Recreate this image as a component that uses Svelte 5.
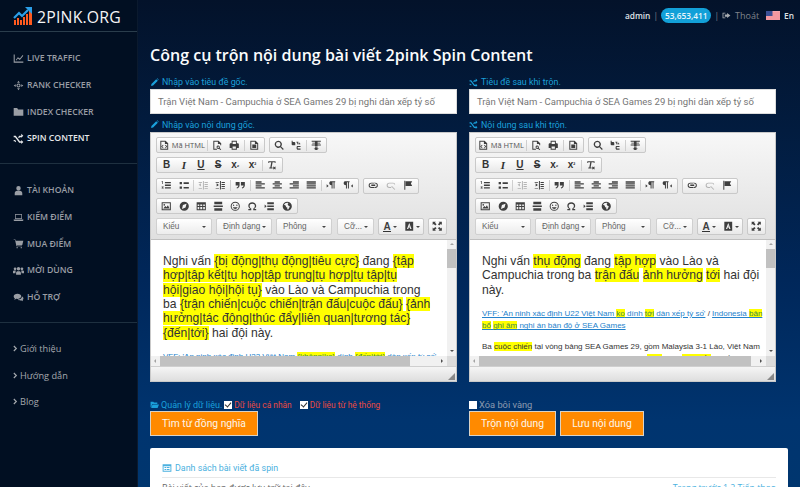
<script>
  const menuA = [
    ['chart', 'LIVE TRAFFIC'],
    ['target', 'RANK CHECKER'],
    ['folder', 'INDEX CHECKER'],
    ['shuffle', 'SPIN CONTENT', true]
  ];
  const menuB = [
    ['user', 'TÀI KHOẢN'],
    ['laptop', 'KIẾM ĐIỂM'],
    ['cart', 'MUA ĐIỂM'],
    ['users', 'MỜI DÙNG'],
    ['chat', 'HỖ TRỢ']
  ];
  const menuC = ['Giới thiệu', 'Hướng dẫn', 'Blog'];

  const icons = {
    chart: 'M1 2h1.500v10.500H15V14H1zM4 10l3-4 3 2 4-5 1 1-5 6-3-2-2 3z',
    target: 'M8 1l2 3H6zM8 15l-2-3h4zM1 8l3-2v4zM15 8l-3 2V6zM8 5a3 3 0 110 6 3 3 0 010-6zm0 1.500a1.500 1.500 0 100 3 1.500 1.500 0 000-3z',
    folder: 'M1 3h5l1.500 2H15v9H1z',
    shuffle: 'M1 4h3l6 8h2v-2l3 3-3 3v-2H9L3 6H1zM1 10h2l1.500 2-1 1.500L2.500 12H1zM9 4h3V1l3 3-3 3V6h-2L8.500 7.500l-1-1.500z',
    user: 'M8 1.500a3.200 3.200 0 110 6.500 3.200 3.200 0 010-6.500zM2.500 15v-3c0-2 1.500-3.500 3.500-3.500h4c2 0 3.500 1.500 3.500 3.500v3z',
    laptop: 'M3 3h10v7H3zm1 1v5h8V4zM1 11h14v1.500l-1 .5H2l-1-.5z',
    cart: 'M1 2h2.500l.5 2h11l-1.500 6H5.500l.3 1H13v1H5L3 3H1zM6 13a1 1 0 110 2 1 1 0 010-2zm6 0a1 1 0 110 2 1 1 0 010-2z',
    users: 'M8 3a2.500 2.500 0 110 5 2.500 2.500 0 010-5zM4.500 14v-2.500C4.500 10 5.500 9 7 9h2c1.500 0 2.500 1 2.500 2.500V14zM3 3.500a2 2 0 110 4 2 2 0 010-4zM13 3.500a2 2 0 110 4 2 2 0 010-4zM0 12V9.500C0 8.500 1 8 2 8h2L3.500 12zM16 12V9.500c0-1-1-1.500-2-1.500h-2l.5 4z',
    chat: 'M6.500 2.500c3 0 5.500 1.700 5.500 3.700S9.500 10 6.500 10c-.700 0-1.300 0-2-.2L2 11.500l.7-2.300C1.500 8.500 1 7.400 1 6.200c0-2 2.500-3.700 5.500-3.700zM13 6.500c1.300.6 2.200 1.700 2.200 2.800 0 .9-.4 1.700-1.200 2.300l.5 1.900-2.200-1.300c-1.900.4-4.300 0-5.300-1.200 3.500 0 6-2 6-4.500z',
    pencil: 'M11 2l3 3-8.500 8.500L2 14l.5-3.500zM12 1l1-.5 2.500 2.500-.5 1z',
    open: 'M1 3h5l1 1.500h6V7H4l-2 6H1zM4.500 8H16l-2.500 6H2z',
    list: 'M1 2h14v12H1zm1.500 3v7.500h11V5zM4 6.500h3V8H4zM8 6.500h4V8H8zM4 9.500h3V11H4zM8 9.500h4V11H8z',
    logout: 'M1 3h5v1.500H2.500v7H6V13H1zM9 3.500L15 8l-6 4.500V10H5V6h4z',
    source: 'M2 1h8l4 4v10H2zm1.500 1.500v11h9V6H9V2.500zM7 8L5 10l2 2-1 .7L3.500 10 6 7.300zM9 8l2 2-2 2 1 .7 2.500-2.700L10 7.300z',
    preview: 'M2 1h8l4 4v3h-1.500V6H9V2.500H3.500v11h4V15H2zM9.500 8.500a2.500 2.500 0 012.200 3.700l2.300 2.300-1 1-2.300-2.300A2.500 2.500 0 119.500 8.500zm0 1.300a1.200 1.200 0 100 2.400 1.200 1.200 0 000-2.400z',
    print: 'M4 1h8v4h2l1 1v6h-3v3H4v-3H1V6l1-1h2zm1.500 1.500V6h5V2.500zM5.500 10v3.500h5V10z',
    template: 'M2 1h8l4 4v10H2zm1.500 1.500v11h9V6H9V2.500zM5 7h6v5H5z',
    search: 'M6.500 1a5.500 5.500 0 014.400 8.800l4 4-1.300 1.300-4-4A5.500 5.500 0 116.500 1zm0 2a3.500 3.500 0 100 7 3.500 3.500 0 000-7z',
    replace: 'M1 1h1.500v2H5c1 0 1.500.6 1.500 1.500V8H2.500C1.500 8 1 7.400 1 6.500zM9 9h5.500v1.500H11c-.6 0-1 .5-1 1.200s.4 1.300 1 1.300h3.500V15H10.500C9.300 15 8.500 13.500 8.500 12S9 9.800 9 9zM8 2.500l3.500.2L10 4h2.500c.8 0 1.500.7 1.500 1.500V7h-1.300V5.800c0-.3-.2-.5-.5-.5H10l1.500 1.300-1 .7z',
    spell: 'M1 1h14v1.500h-5V4h4v1.500h-4V7h5v1.500h-5V10H6V8.500H1V7h5V5.500H2V4h4V2.500H1zM6 11h4v2h2l-4 3-4-3h2z',
    clear: 'M2 2h11v2.500h-1L11.500 3.500H8.500L7 11.500h1.500V13h-5v-1.500H5l1.500-8H3.500L3 4.500H2zM10 10l1.200 1.200L12.500 10l1 1-1.300 1.300 1.300 1.200-1 1-1.300-1.300L10 14.500l-1-1 1.300-1.200L9 11z',
    ol: 'M1 2h2v4H2V3H1zM1 10h3v1L2.500 12H4v1H1v-1l1.500-1H1zM6 3h9v2H6zM6 7h9v2H6zM6 11h9v2H6z',
    ul: 'M1 3h3.500v3.500H1zM1 10h3.500v3.500H1zM7 3.500h8v2.500H7zM7 10.500h8V13H7z',
    outdent: 'M7.500 1.500H9v13H7.500zM1 7.300l3.500-2.500v5zM10 3h5v1.500h-5zM10 6h5v1.500h-5zM10 9h5v1.500h-5zM10 12h5v1.500h-5zM1 3h5v1.500H1zM1 12h5v1.500H1z',
    indent: 'M7.500 1.500H9v13H7.500zM6 7.500L2.500 10V5zM10 3h5v1.500h-5zM10 6h5v1.500h-5zM10 9h5v1.500h-5zM10 12h5v1.500h-5zM1 3h5v1H1zM1 12h5v1H1z',
    quote: 'M1 3h6v5c0 2.500-1.500 4-4 5l-.7-1.200C4 11 5 10 5 8.500H1zM9 3h6v5c0 2.500-1.500 4-4 5l-.7-1.200C12 11 13 10 13 8.500H9z',
    aleft: 'M1 2h9v2H1zM1 5h14v2H1zM1 8h9v2H1zM1 11h14v2H1z',
    acenter: 'M4 2h8v2H4zM1 5h14v2H1zM4 8h8v2H4zM1 11h14v2H1z',
    aright: 'M6 2h9v2H6zM1 5h14v2H1zM6 8h9v2H6zM1 11h14v2H1z',
    ajust: 'M1 2h14v2H1zM1 5h14v2H1zM1 8h14v2H1zM1 11h14v2H1z',
    ltr: 'M7 2h7v1.500h-1V13h-1.500V3.500H10V13H8.500V8C6.500 8 5 7 5 5s1.500-3 2-3zM1 6.500l3 2.500-3 2.500z',
    rtl: 'M3 2h7v1.500H9V13H7.500V3.500H6V13H4.500V8C2.500 8 1 7 1 5s1.500-3 2-3zM15 6.500L12 9l3 2.500z',
    link: 'M5 4h3a4 4 0 013 1.500H5a2.500 2.500 0 000 5h6A4 4 0 018 12H5a4 4 0 010-8zM11 4a4 4 0 010 8H8.800c.5-.4.900-.9 1.200-1.500h1a2.500 2.500 0 000-5h-1C9.700 4.900 9.300 4.400 8.800 4zM5 7h6v2H5z',
    unlink: 'M5 4h6a3 3 0 013 3H12.500A1.500 1.500 0 0011 5.500H5a2.500 2.500 0 000 5h3V12H5a4 4 0 010-8zM9 9l5 5-1 1-5-5z',
    flag: 'M2 1h1.500v14H2zM4 2h10l-2 3.500L14 9H4z',
    image: 'M1 2h14v12H1zm1.500 1.500v9h11v-9zM3.500 11.500l3-4 2 2 2-3 2.500 5zM5 4.500a1.300 1.300 0 110 2.600 1.300 1.300 0 010-2.600z',
    flash: 'M8 1a7 7 0 110 14A7 7 0 018 1zm3.500 3L6 6l-1.500 6L10 10z',
    table: 'M1 2h14v12H1zm1.500 3.500v2.200H5V5.500zm4 0v2.200h3V5.500zm4.500 0v2.200h2.500V5.500zM2.500 9v3.500H5V9zm4 0v3.500h3V9zm4.500 0v3.500h2.500V9z',
    hr: 'M2 1h12v4H2zM1 7h14v2H1zM2 11h12v4H2z',
    smile: 'M8 1a7 7 0 110 14A7 7 0 018 1zm0 1.500a5.500 5.500 0 100 11 5.500 5.500 0 000-11zM5.500 5.500a1 1 0 110 2 1 1 0 010-2zm5 0a1 1 0 110 2 1 1 0 010-2zM4.500 9.500h7c-.5 1.500-2 2.500-3.500 2.500s-3-1-3.500-2.500z',
    omega: 'M8 2c3.500 0 6 2.300 6 5.300 0 2-1.200 3.700-3 4.700h3v2H9.500v-2.500c1.500-.7 2.500-2.200 2.500-4 0-2.200-1.700-3.500-4-3.500S4 5.300 4 7.500c0 1.800 1 3.300 2.500 4V14H2v-2h3C3.200 11 2 9.300 2 7.300 2 4.300 4.500 2 8 2z',
    pagebreak: 'M5 2h10v3H5zM5 7h10v2H5zM5 11h10v3H5zM1 5.500L4 8l-3 2.500z',
    globe: 'M8 1a7 7 0 110 14A7 7 0 018 1zm0 1.500a5.500 5.500 0 00-5 3.200l2.500 1.300 1 2.500 1.500.5v2.500l1.500.4 2.500-4.400-2.500-1.500-1-2.500L10 3a5.500 5.500 0 00-2-.5z',
    bgcolor: 'M2 1h12v14H2zM8 3l-3.500 9h2l.6-2h1.800l.6 2h2zm0 3.500l.5 2h-1z',
    full: 'M1 1h5L4.500 2.500 7 5 5 7 2.500 4.500 1 6zM15 1v5l-1.500-1.500L11 7 9 5l2.500-2.500L10 1zM1 15v-5l1.500 1.500L5 9l2 2-2.500 2.500L6 15zM15 15h-5l1.500-1.500L9 11l2-2 2.500 2.500L15 10z'
  };

  const t = (s, c = '') => ({ text: s, cls: c });
  const i = (n, off = false) => ({ icon: n, off });

  const rows = [
    [
      [{ icon: 'source', label: 'Mã HTML' }, 'sep', i('preview'), i('print'), 'sep', i('template')],
      [i('search'), i('replace'), 'sep', i('spell')]
    ],
    [[t('B', 'b'), t('I', 'it'), t('U', 'u'), t('S', 's'), { text: 'x', sub: '₂' }, { text: 'x', sub: '²' }, 'sep', i('clear')]],
    [
      [i('ol'), i('ul'), 'sep', i('outdent', true), i('indent'), 'sep', i('quote'), 'sep', i('aleft'), i('acenter'), i('aright'), i('ajust'), 'sep', i('ltr'), i('rtl')],
      [i('link'), i('unlink', true), i('flag')]
    ],
    [[i('image'), i('flash'), i('table'), i('hr'), i('smile'), i('omega'), i('pagebreak'), i('globe')]]
  ];

  const combos = [
    ['Kiểu', 'w56'],
    ['Định dạng', 'w56'],
    ['Phông', 'w56'],
    ['Cỡ...', 'w36']
  ];
</script>

{#snippet ic(name, cls = 'mi')}
  <svg class={cls} viewBox="0 0 16 16" aria-hidden="true"><path d={icons[name]} fill="currentColor" fill-rule="evenodd" /></svg>
{/snippet}

{#snippet toolbar()}
  <div class="toolbar">
    {#each rows as row}
      <div class="row">
        {#each row as group}
          <div class="group">
            {#each group as b}
              {#if b === 'sep'}
                <span class="sep"></span>
              {:else if b.label}
                <span class="tb wide">{@render ic(b.icon, 'ti')}<span class="lbl">{b.label}</span></span>
              {:else if b.icon}
                <span class="tb" class:off={b.off}>{@render ic(b.icon, 'ti')}</span>
              {:else}
                <span class="tb txt {b.cls || ''}">{b.text}{#if b.sub}<small>{b.sub}</small>{/if}</span>
              {/if}
            {/each}
          </div>
        {/each}
      </div>
    {/each}
    <div class="row combos">
      {#each combos as c}
        <div class="combo {c[1]}"><span>{c[0]}</span><i class="caret"></i></div>
      {/each}
      <div class="group colors">
        <span class="tb color"><span class="a">A</span><i class="caret"></i></span>
        <span class="tb color">{@render ic('bgcolor', 'ti')}<i class="caret"></i></span>
      </div>
      <div class="group fs"><span class="tb">{@render ic('full', 'ti')}</span></div>
    </div>
  </div>
{/snippet}

{#snippet frame(body)}
  <div class="editor">
    {@render toolbar()}
    <div class="view">
      <div class="content">{@render body()}</div>
      <div class="vbar"><i class="up"></i><span class="thumb"></span><i class="down"></i></div>
      <div class="hbar"><i class="lf"></i><span class="hthumb"></span><i class="rt"></i></div>
      <div class="corner"></div>
    </div>
    <div class="foot"><svg viewBox="0 0 8 8" class="grip"><path d="M8 0v8H0z" fill="#888" /></svg></div>
  </div>
{/snippet}

{#snippet leftBody()}
  <p class="lead nl">Nghi vấn <mark>{'{bị động|thụ động|tiêu cực}'}</mark> đang <mark>{'{tập hợp|tập kết|tụ họp|tập trung|tụ hợp|tụ tập|tụ hội|giao hội|hội tụ}'}</mark> vào Lào và Campuchia trong ba <mark>{'{trận chiến|cuộc chiến|trận đấu|cuộc đấu}'}</mark> <mark>{'{ảnh hưởng|tác động|thúc đẩy|liên quan|tương tác}'}</mark> <mark>{'{đến|tới}'}</mark> hai đội này.</p>
  <p class="small"><a href="#a">VFF: 'An ninh xác định U22 Việt Nam <mark>{'{không|ko}'}</mark> dính <mark>{'{đến|tới}'}</mark> dàn xếp tỷ số'</a></p>
{/snippet}

{#snippet rightBody()}
  <p class="lead">Nghi vấn <mark>thụ động</mark> đang <mark>tập hợp</mark> vào Lào và Campuchia trong ba <mark>trận đấu</mark> <mark>ảnh hưởng</mark> <mark>tới</mark> hai đội này.</p>
  <p class="small"><a href="#a">VFF: 'An ninh xác định U22 Việt Nam <mark>ko</mark> dính <mark>tới</mark> dàn xếp tỷ số'</a> / <a href="#b">Indonesia <mark>bản</mark> <mark>bổ</mark> <mark>ghi âm</mark> nghi án bán độ ở SEA Games</a></p>
  <p class="small">Ba <mark>cuộc chiến</mark> tại vòng bảng SEA Games 29, gồm Malaysia 3-1 Lào, Việt Nam 1-1 Campuchia và Thái Lan 3-0 Campuchia bị <mark>nghi</mark> dính <mark>dàn xếp</mark> tỷ số.</p>
{/snippet}

<div class="page">
  <aside class="side">
    <div class="logo">
      <svg class="mark" viewBox="0 0 20 20" aria-hidden="true">
        <path d="M1 19v-5h2v5zM4 19v-7h2v7zM7 19v-5h2v5zM10 19v-8h2v8zM13 19V8h2v11zM16 19V5h3v14z" fill="#ff5a1f" />
        <path d="M1 12l5-5 3 3 6-6" fill="none" stroke="#2b9fe8" stroke-width="2.200" />
        <path d="M12 1h7v7z" fill="#2b9fe8" />
      </svg>
      <span>2PINK.ORG</span>
    </div>
    <nav class="sec">
      {#each menuA as m}
        <div class="item" class:active={m[2]}>{@render ic(m[0])}<span>{m[1]}</span></div>
      {/each}
    </nav>
    <nav class="sec">
      {#each menuB as m}
        <div class="item">{@render ic(m[0])}<span>{m[1]}</span></div>
      {/each}
    </nav>
    <nav class="sec last">
      {#each menuC as m}
        <div class="item sub"><svg class="chev" viewBox="0 0 6 8"><path d="M1 1l3 3-3 3" fill="none" stroke="currentColor" stroke-width="1.400" /></svg><span>{m}</span></div>
      {/each}
    </nav>
  </aside>

  <main class="main">
    <header class="top">
      <b>admin</b><span class="pipe">|</span><span class="pill">53,653,411</span><span class="pipe">|</span>
      {@render ic('logout', 'lo')}<span class="out">Thoát</span>
      <svg class="us" viewBox="0 0 14 9" aria-hidden="true">
        <rect width="14" height="9" fill="#f4a6ad" />
        <path d="M0 2h14M0 4h14M0 6h14M0 8h14" stroke="#ef7f8a" stroke-width=".7" />
        <rect width="6.500" height="5" fill="#3a4f95" />
      </svg>
      <b>En</b>
    </header>

    <h1>Công cụ trộn nội dung bài viết 2pink Spin Content</h1>

    <div class="cols">
      <div class="col">
        <div class="label">{@render ic('pencil', 'li')}Nhập vào tiêu đề gốc.</div>
        <div class="input">Trận Việt Nam - Campuchia ở SEA Games 29 bị nghi dàn xếp tỷ số</div>
        <div class="label l2">{@render ic('pencil', 'li')}Nhập vào nội dung gốc.</div>
        {@render frame(leftBody)}
        <div class="opts">
          {@render ic('open', 'li')}<span class="blue">Quản lý dữ liệu.</span>
          <span class="ck on"></span><span class="red">Dữ liệu cá nhân</span>
          <span class="ck on gap"></span><span class="red">Dữ liệu từ hệ thống</span>
        </div>
        <div class="btns"><span class="btn w108">Tìm từ đồng nghĩa</span></div>
      </div>
      <div class="col">
        <div class="label">{@render ic('shuffle', 'li')}Tiêu đề sau khi trộn.</div>
        <div class="input">Trận Việt Nam - Campuchia ở SEA Games 29 bị nghi dàn xếp tỷ số</div>
        <div class="label l2">{@render ic('shuffle', 'li')}Nội dung sau khi trộn.</div>
        {@render frame(rightBody)}
        <div class="opts"><span class="ck"></span><span class="grey">Xóa bôi vàng</span></div>
        <div class="btns"><span class="btn w87">Trộn nội dung</span><span class="btn w84">Lưu nội dung</span></div>
      </div>
    </div>

    <section class="card">
      <div class="cardhead">{@render ic('list', 'ci')}Danh sách bài viết đã spin</div>
      <div class="cardrow"><span>Bài viết của bạn được lưu trữ tại đây</span><span class="pg">Trang trước 1 2 Tiếp theo</span></div>
    </section>
  </main>
</div>

<style>
  :global(body) { margin: 0; background: #00336b; }
  .page {
    display: grid;
    grid-template-columns: 138px 1fr;
    width: 800px;
    height: 487px;
    overflow: hidden;
    font-family: "Open Sans", "Noto Sans", sans-serif;
    background: linear-gradient(180deg, #03122a 0, #021c3f 130px, #00275a 280px, #00346f 420px, #00366f 487px);
  }
  .side {
    background: #010f22;
    border-right: 1px solid #0b1a2e;
    display: flex;
    flex-direction: column;
    box-sizing: border-box;
    height: 487px;
    overflow: hidden;
  }
  .logo {
    height: 32px;
    box-sizing: border-box;
    border-bottom: 1px solid #2a3d4c;
    display: flex;
    align-items: center;
    padding: 6px 0 0 13px;
    gap: 4px;
    color: #f4f5f6;
    font-size: 15.800px;
    font-weight: 400;
    letter-spacing: .2px;
  }
  .mark { width: 20px; height: 20px; margin-top: -5px; }
  .logo span { margin-top: -4px; }
  .sec {
    padding: 13px 0 13px 13px;
    border-bottom: 1px solid #1e3040;
    display: flex;
    flex-direction: column;
    height: 132px;
    box-sizing: border-box;
  }
  .sec:nth-of-type(2) { height: 159px; }
  .sec.last { border: 0; height: auto; padding-top: 12px; }
  .item {
    height: 26.700px;
    flex: none;
    display: flex;
    align-items: center;
    gap: 3px;
    font-size: 8.700px;
    font-weight: 600;
    color: #9a9ea5;
  }
  .item.active { color: #e6e8ea; }
  .item.sub { font-size: 9.200px; color: #a5a9ae; gap: 2px; font-weight: 400; }
  .mi { width: 11px; height: 11px; flex: none; }
  .chev { width: 5px; height: 7px; }

  .main { position: relative; padding: 0 12px 0 12px; min-width: 0; }
  .top {
    height: 32px;
    display: flex;
    align-items: center;
    justify-content: flex-end;
    gap: 3px;
    font-size: 8.300px;
    color: #c9ccd0;
    padding-bottom: 1px;
    box-sizing: border-box;
    margin-right: -6px;
  }
  .top b { font-weight: 600; color: #dfe2e5; }
  .pipe { color: #7e848c; }
  .pill {
    background: #12a0d8;
    color: #eaf6fb;
    font-weight: 600;
    border-radius: 8px;
    height: 15px;
    line-height: 15px;
    padding: 0 4px;
  }
  .lo { width: 9px; height: 9px; color: #a7abb0; }
  .out { color: #80848b; margin-right: 4px; margin-left: 1px; font-size: 9px; }
  .us { width: 14px; height: 9px; margin-right: 1px; }
  h1 {
    margin: 12px 0 0;
    height: 24px;
    font-size: 16.050px;
    line-height: 22px;
    font-weight: 600;
    color: #fbfcfd;
    white-space: nowrap;
  }
  .cols { display: grid; grid-template-columns: 307px 307px; column-gap: 12px; margin-top: 7px; }
  .label {
    height: 14px;
    display: flex;
    align-items: center;
    font-family: Roboto, sans-serif;
    font-size: 8.900px;
    color: #1aa0db;
    gap: 3px;
    white-space: nowrap;
  }
  .l2 { margin-top: 3px; height: 15px; }
  .li { width: 9px; height: 9px; color: #1aa0db; flex: none; }
  .input {
    height: 25px;
    box-sizing: border-box;
    background: #fff;
    padding: 0 7px;
    display: flex;
    align-items: center;
    font-family: Roboto, sans-serif;
    font-size: 9.500px;
    color: #757575;
    white-space: nowrap;
    border: 1px solid #dcdcdc;
  }
  .editor {
    width: 307px;
    height: 250px;
    box-sizing: border-box;
    border: 1px solid #c9c9c9;
    background: #f1f1f1;
    display: flex;
    flex-direction: column;
    overflow: hidden;
  }
  .toolbar {
    height: 107px;
    flex: none;
    box-sizing: border-box;
    padding: 4px 5px 0;
    background: linear-gradient(180deg, #f7f7f7, #e0e0e0);
    border-bottom: 1px solid #bfbfbf;
    color: #3f3f3f;
  }
  .row { display: flex; gap: 4px; height: 20.250px; }
  .group {
    display: flex;
    align-items: center;
    height: 16px;
    box-sizing: border-box;
    border: 1px solid #c9c9c9;
    border-radius: 2px;
    background: linear-gradient(180deg, #fff, #e8e8e8);
    padding: 0 1px;
  }
  .tb {
    width: 17.200px;
    height: 14px;
    display: flex;
    align-items: center;
    justify-content: center;
    flex: none;
  }
  .tb.wide { width: 48px; gap: 2px; }
  .lbl { font-size: 7.500px; color: #555; white-space: nowrap; }
  .ti { width: 10.500px; height: 10.500px; flex: none; }
  .tb.off { opacity: .35; }
  .sep { width: 1px; height: 11px; background: #cfcfcf; margin: 0 .75px; flex: none; }
  .txt { font-family: "Liberation Sans", sans-serif; font-size: 10px; font-weight: 700; color: #333; line-height: 1; }
  .txt small { font-size: 6px; }
  .it { font-style: italic; font-family: "Liberation Serif", serif; font-size: 11px; }
  .u { text-decoration: underline; }
  .s { text-decoration: line-through; }
  .combos { height: 17px; gap: 4px; align-items: stretch; }
  .combo {
    box-sizing: border-box;
    height: 17px;
    border: 1px solid #d0d0d0;
    border-radius: 2px;
    background: linear-gradient(180deg, #fff, #ececec);
    display: flex;
    align-items: center;
    justify-content: space-between;
    padding: 0 5px 0 6px;
    font-size: 8.200px;
    color: #666;
    font-family: "Liberation Sans", sans-serif;
  }
  .w56 { width: 56px; }
  .w36 { width: 37px; margin-left: 1px; }
  .caret { width: 0; height: 0; border: 2px solid transparent; border-top: 2.500px solid #444; border-bottom: 0; flex: none; }
  .colors, .fs { height: 17px; padding: 0; }
  .color { width: 22px; height: 15px; gap: 2px; }
  .a { font: 700 10px "Liberation Sans", sans-serif; border-bottom: 1.500px solid #333; line-height: 9px; }
  .view {
    flex: 1;
    min-height: 0;
    background: #fff;
    display: grid;
    grid-template-columns: 1fr 9px;
    grid-template-rows: 1fr 10px;
  }
  .content {
    overflow: hidden;
    padding: 14px 0 0 12px;
    color: #333;
    font-family: "Liberation Sans", sans-serif;
    min-width: 0;
  }
  .content p { margin: 0; }
  .lead { font-size: 12.150px; line-height: 14.350px; width: 280px; }
  .lead.nl { width: 270px; }
  .small { font-size: 8px; line-height: 12.300px; margin-top: 11px !important; width: 285px; }
  .small + .small { margin-top: 8px !important; }
  mark { background: #ffff00; color: inherit; }
  a { color: #2482cc; }
  a mark { background: #ffff00; color: #3a8a4c; }
  .vbar { background: #f1f1f1; display: flex; flex-direction: column; align-items: center; }
  .up, .down { height: 9px; width: 9px; flex: none; position: relative; }
  .up::after, .down::after { content: ""; position: absolute; left: 2.500px; top: 3px; border: 2px solid transparent; }
  .up::after { border-bottom: 2.500px solid #a3a3a3; border-top: 0; }
  .down { margin-top: auto; }
  .down::after { border-top: 2.500px solid #505050; border-bottom: 0; }
  .thumb { width: 9px; height: 19px; background: #c1c1c1; flex: none; }
  .hbar { background: #f1f1f1; display: flex; align-items: stretch; }
  .lf, .rt { width: 9px; flex: none; position: relative; }
  .lf::after, .rt::after { content: ""; position: absolute; top: 3px; left: 3px; border: 2px solid transparent; }
  .lf::after { border-right: 2.500px solid #a3a3a3; border-left: 0; }
  .rt { margin-left: auto; }
  .rt::after { border-left: 2.500px solid #505050; border-right: 0; }
  .hthumb { width: 250px; background: #c1c1c1; }
  .col:nth-child(2) .hthumb { width: 272px; }
  .corner { background: #dcdcdc; }
  .foot {
    height: 15px;
    flex: none;
    background: linear-gradient(180deg, #f5f5f5, #dedede);
    border-top: 1px solid #cfcfcf;
    position: relative;
    box-sizing: border-box;
  }
  .grip { position: absolute; right: 1px; bottom: 1px; width: 7px; height: 7px; }
  .opts {
    height: 13px;
    margin-top: 16px;
    display: flex;
    align-items: center;
    gap: 2px;
    font-family: Roboto, sans-serif;
    font-size: 9px;
    white-space: nowrap;
  }
  .blue { color: #1aa0db; }
  .red { color: #ea4a42; font-size: 8.400px; }
  .grey { color: #8d9bb0; font-size: 9.300px; }
  .ck {
    width: 8px;
    height: 8px;
    background: #fff;
    flex: none;
    position: relative;
  }
  .ck.on::after {
    content: "";
    position: absolute;
    left: 2px;
    top: .5px;
    width: 3px;
    height: 5px;
    border: solid #333;
    border-width: 0 1px 1px 0;
    transform: rotate(40deg);
  }
  .gap { margin-left: 6px; }
  .btns { display: flex; gap: 4px; }
  .btn {
    height: 25px;
    box-sizing: border-box;
    background: #ff8a00;
    border: 1px solid #d9d3c7;
    color: #fdf6ea;
    font-family: Roboto, sans-serif;
    font-size: 10.300px;
    display: flex;
    align-items: center;
    justify-content: center;
    white-space: nowrap;
  }
  .w108 { width: 108px; }
  .w87 { width: 87px; }
  .w84 { width: 84px; }
  .card {
    margin: 12px -1px 0 0;
    width: 638px;
    height: 80px;
    background: #fff;
    border-radius: 2px;
    padding: 0 12px;
    box-sizing: border-box;
  }
  .cardhead {
    height: 30px;
    box-sizing: border-box;
    padding-top: 10px;
    display: flex;
    align-items: center;
    gap: 3px;
    font-family: Roboto, sans-serif;
    font-size: 8.900px;
    color: #4bb1e0;
    border-bottom: 1px solid #e8e8e8;
  }
  .ci { width: 10px; height: 10px; color: #4bb1e0; }
  .cardrow {
    display: flex;
    justify-content: space-between;
    font-size: 8.800px;
    color: #666;
    padding-top: 4px;
  }
  .pg { color: #4bb1e0; }
</style>
